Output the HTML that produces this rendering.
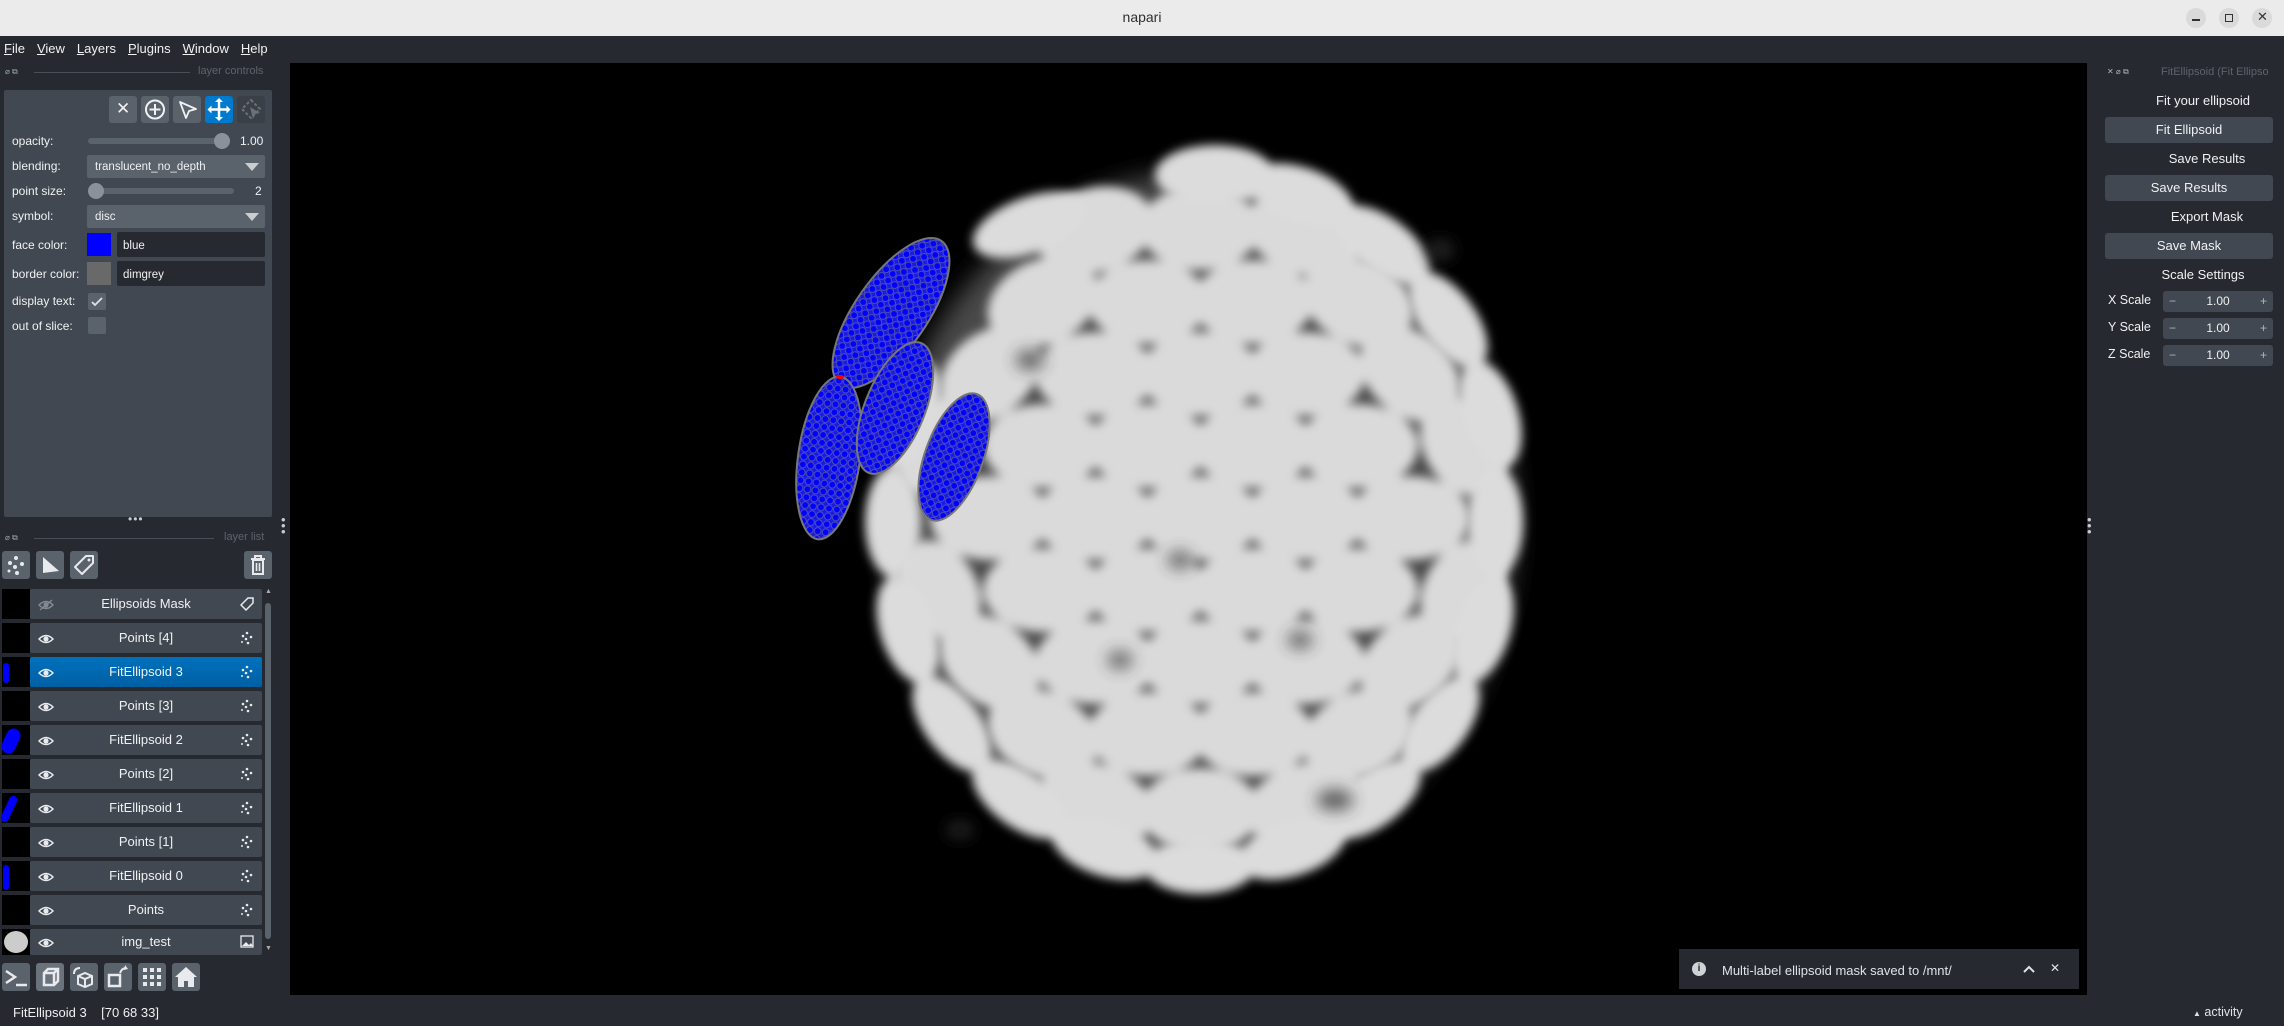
<!DOCTYPE html>
<html><head><meta charset="utf-8"><style>
*{margin:0;padding:0;box-sizing:border-box}
body{width:2284px;height:1026px;background:#262930;font-family:"Liberation Sans","DejaVu Sans",sans-serif;color:#f0f1f2;position:relative;overflow:hidden}
.a{position:absolute}
.t{position:absolute;white-space:nowrap}
.lbl{font-size:12px;color:#f0f1f2}
.btn{position:absolute;background:#5a626c;border-radius:3px}
.row{position:absolute;left:30px;width:232px;height:30px;background:#414851;border-radius:2px;font-size:13px;text-align:center;line-height:30px}
.th{position:absolute;left:2px;width:28px;height:30px;background:#000}
.eye{position:absolute;left:8px;top:9px}
.pi{position:absolute;right:8px;top:8px}
.lb{position:absolute;width:28px;height:28px;background:#5a626c;border-radius:3px}
.rbtn{position:absolute;left:2105px;width:168px;height:26px;background:#414851;border-radius:3px;font-size:13px;text-align:center;line-height:26px}
.rl{position:absolute;font-size:13px;text-align:center;width:130px}
.sp{position:absolute;left:2163px;width:110px;height:21px;background:#414851;border-radius:3px;font-size:12px;line-height:21px;text-align:center}
</style></head><body>
<!-- title bar -->
<div class="a" style="left:0;top:0;width:2284px;height:36px;background:#ebebeb"></div>
<div class="t" style="left:0;width:2284px;top:9px;text-align:center;font-size:14px;color:#2e2e2e">napari</div>
<div class="a" style="left:2186px;top:8px;width:20px;height:20px;border-radius:50%;background:#dadada"></div>
<div class="a" style="left:2192px;top:19px;width:8px;height:1.5px;background:#333"></div>
<div class="a" style="left:2219px;top:8px;width:20px;height:20px;border-radius:50%;background:#dadada"></div>
<div class="a" style="left:2225px;top:14px;width:8px;height:8px;border:1.3px solid #333"></div>
<div class="a" style="left:2252px;top:8px;width:20px;height:20px;border-radius:50%;background:#dadada"></div>
<div class="t" style="left:2257px;top:9px;font-size:13px;color:#333">✕</div>
<!-- menu -->
<div class="t" style="left:4px;top:41px;font-size:13px">
<span style="margin-right:12px"><u>F</u>ile</span><span style="margin-right:12px"><u>V</u>iew</span><span style="margin-right:12px"><u>L</u>ayers</span><span style="margin-right:12px"><u>P</u>lugins</span><span style="margin-right:12px"><u>W</u>indow</span><span><u>H</u>elp</span></div>

<!-- layer controls -->
<div class="t" style="left:5px;top:67px;font-size:8px;color:#9aa">⌀ ⧉</div>
<div class="a" style="left:34px;top:72px;width:156px;height:1px;background:#4a4f57"></div>
<div class="t" style="left:198px;top:65px;font-size:11px;color:#5d636b">layer controls</div>
<div class="a" style="left:4px;top:90px;width:268px;height:427px;background:#414851;border-radius:2px"></div>
<div class="btn" style="left:109px;top:96px;width:28px;height:27px"></div><div class="t" style="left:116px;top:99px;font-size:17px">✕</div>
<div class="btn" style="left:141px;top:96px;width:28px;height:27px"></div>
<svg class="a" style="left:141px;top:96px" width="28" height="27"><circle cx="14" cy="13.5" r="9" fill="none" stroke="#f0f1f2" stroke-width="2"/><path d="M14 8v11M8.5 13.5h11" stroke="#f0f1f2" stroke-width="2"/></svg>
<div class="btn" style="left:173px;top:96px;width:28px;height:27px"></div>
<svg class="a" style="left:173px;top:96px" width="28" height="27"><path d="M7 6l16 7-7 2-3 7z" fill="none" stroke="#f0f1f2" stroke-width="1.8" stroke-linejoin="round"/></svg>
<div class="a" style="left:205px;top:96px;width:28px;height:27px;background:#007acc;border-radius:3px"></div>
<svg class="a" style="left:205px;top:96px" width="28" height="27"><path d="M14 4v19M4.5 13.5h19" stroke="#fff" stroke-width="2.5"/><path d="M14 2l-4 4h8zM14 25l-4-4h8zM2.5 13.5l4-4v8zM25.5 13.5l-4-4v8z" fill="#fff"/></svg>
<div class="a" style="left:237px;top:96px;width:28px;height:27px;background:#3b4048;border-radius:3px"></div>
<svg class="a" style="left:237px;top:96px" width="28" height="27"><path d="M14 4l9 9-9 9-9-9z" fill="none" stroke="#6a717a" stroke-width="2" stroke-dasharray="3 2"/><path d="M13 11l10 6-5 1-2 5z" fill="#6a717a"/></svg>

<div class="t lbl" style="left:12px;top:134px">opacity:</div>
<div class="a" style="left:88px;top:138px;width:140px;height:6px;background:#5a626c;border-radius:3px"></div>
<div class="a" style="left:214px;top:133px;width:16px;height:16px;border-radius:50%;background:#8b9198"></div>
<div class="t lbl" style="left:240px;top:134px">1.00</div>
<div class="t lbl" style="left:12px;top:159px">blending:</div>
<div class="a" style="left:87px;top:155px;width:178px;height:23px;background:#5a626c;border-radius:2px"></div>
<div class="t" style="left:95px;top:161px;font-size:11.5px">translucent_no_depth</div>
<div class="a" style="left:245px;top:163px;border:7px solid transparent;border-top:8px solid #c9cdd1;border-bottom:0"></div>
<div class="t lbl" style="left:12px;top:184px">point size:</div>
<div class="a" style="left:88px;top:188px;width:146px;height:6px;background:#5a626c;border-radius:3px"></div>
<div class="a" style="left:88px;top:183px;width:16px;height:16px;border-radius:50%;background:#8b9198"></div>
<div class="t lbl" style="left:255px;top:184px">2</div>
<div class="t lbl" style="left:12px;top:209px">symbol:</div>
<div class="a" style="left:87px;top:205px;width:178px;height:23px;background:#5a626c;border-radius:2px"></div>
<div class="t" style="left:95px;top:211px;font-size:11.5px">disc</div>
<div class="a" style="left:245px;top:213px;border:7px solid transparent;border-top:8px solid #c9cdd1;border-bottom:0"></div>
<div class="t lbl" style="left:12px;top:238px">face color:</div>
<div class="a" style="left:87px;top:233px;width:24px;height:23px;background:#0000ff"></div>
<div class="a" style="left:117px;top:232px;width:148px;height:25px;background:#262930;border-radius:2px"></div>
<div class="t" style="left:123px;top:240px;font-size:11.5px">blue</div>
<div class="t lbl" style="left:12px;top:267px">border color:</div>
<div class="a" style="left:87px;top:262px;width:24px;height:23px;background:#696969"></div>
<div class="a" style="left:117px;top:261px;width:148px;height:25px;background:#262930;border-radius:2px"></div>
<div class="t" style="left:123px;top:269px;font-size:11.5px">dimgrey</div>
<div class="t lbl" style="left:12px;top:294px">display text:</div>
<div class="a" style="left:88px;top:293px;width:18px;height:17px;background:#5a626c;border-radius:2px"></div>
<svg class="a" style="left:88px;top:293px" width="18" height="17"><path d="M4 9l3 3 7-7" fill="none" stroke="#e0e3e6" stroke-width="1.8"/></svg>
<div class="t lbl" style="left:12px;top:319px">out of slice:</div>
<div class="a" style="left:88px;top:317px;width:18px;height:17px;background:#5a626c;border-radius:2px"></div>

<div class="t" style="left:128px;top:512px;font-size:12px;color:#c8ccd0;letter-spacing:1px">•••</div>
<div class="t" style="left:281px;top:517px;font-size:13px;color:#c8ccd0;line-height:6px">•<br>•<br>•</div>

<!-- layer list -->
<div class="t" style="left:5px;top:533px;font-size:8px;color:#9aa">⌀ ⧉</div>
<div class="a" style="left:34px;top:538px;width:180px;height:1px;background:#4a4f57"></div>
<div class="t" style="left:224px;top:531px;font-size:11px;color:#5d636b">layer list</div>
<div class="lb" style="left:2px;top:551px"></div>
<svg class="a" style="left:2px;top:551px" width="28" height="28"><g fill="#e8eaed"><circle cx="14" cy="7" r="2"/><circle cx="8" cy="12" r="2"/><circle cx="20" cy="13" r="2"/><circle cx="13" cy="16" r="2"/><circle cx="7" cy="20" r="1.5"/><circle cx="15" cy="22" r="2"/></g></svg>
<div class="lb" style="left:36px;top:551px"></div>
<svg class="a" style="left:36px;top:551px" width="28" height="28"><path d="M7 6l16 14-16 2z" fill="#e8eaed"/></svg>
<div class="lb" style="left:70px;top:551px"></div>
<svg class="a" style="left:70px;top:551px" width="28" height="28"><path d="M16 5h7v7L12 23 5 16z" fill="none" stroke="#e8eaed" stroke-width="2" stroke-linejoin="round"/><circle cx="19" cy="9" r="1.5" fill="#e8eaed"/></svg>
<div class="lb" style="left:244px;top:551px"></div>
<svg class="a" style="left:244px;top:551px" width="28" height="28"><path d="M7 8h14M11 8V5h6v3M9 9h10v14H9z" fill="none" stroke="#e8eaed" stroke-width="2"/><path d="M12.5 12v8M15.5 12v8" stroke="#e8eaed" stroke-width="1.6"/></svg>

<div class="a" style="left:264px;top:589px;width:8px;height:366px;background:#262930"></div>
<div class="a" style="left:265px;top:603px;width:6px;height:336px;background:#5a626c;border-radius:3px"></div>
<div class="t" style="left:265px;top:588px;font-size:7px;color:#aaa">▲</div>
<div class="t" style="left:265px;top:945px;font-size:7px;color:#aaa">▼</div>

<svg width="0" height="0" style="position:absolute"><defs>
<g id="eye"><path d="M1 7Q8 0 15 7Q8 14 1 7z" fill="none" stroke="#e8eaed" stroke-width="1.5"/><circle cx="8" cy="7" r="2.6" fill="#e8eaed"/></g>
<g id="pts"><g fill="#e8eaed"><circle cx="7" cy="2" r="1.3"/><circle cx="3" cy="5" r="1.3"/><circle cx="11" cy="6" r="1.3"/><circle cx="6" cy="8" r="1.3"/><circle cx="2" cy="11" r="1"/><circle cx="8" cy="12" r="1.3"/></g></g>
</defs></svg>

<div class="th" style="top:589px"></div><div class="row" style="top:589px">Ellipsoids Mask<svg class="eye" width="16" height="14" style="opacity:.4"><use href="#eye"/><path d="M2 12L14 2" stroke="#e8eaed" stroke-width="1.3"/></svg><svg class="pi" width="14" height="14"><path d="M8 1h5v5L6 13 1 8z" fill="none" stroke="#e8eaed" stroke-width="1.5"/></svg></div>
<div class="th" style="top:623px"></div><div class="row" style="top:623px">Points [4]<svg class="eye" width="16" height="14"><use href="#eye"/></svg><svg class="pi" width="14" height="14"><use href="#pts"/></svg></div>
<div class="th" style="top:657px"><div class="a" style="left:1px;top:6px;width:6px;height:20px;background:#00f;border-radius:3px"></div></div><div class="row" style="top:657px;background:linear-gradient(#0071bc,#005fa3)">FitEllipsoid 3<svg class="eye" width="16" height="14"><use href="#eye"/></svg><svg class="pi" width="14" height="14"><use href="#pts"/></svg></div>
<div class="th" style="top:691px"></div><div class="row" style="top:691px">Points [3]<svg class="eye" width="16" height="14"><use href="#eye"/></svg><svg class="pi" width="14" height="14"><use href="#pts"/></svg></div>
<div class="th" style="top:725px"><div class="a" style="left:2px;top:3px;width:14px;height:26px;background:#00f;border-radius:7px;transform:rotate(25deg)"></div></div><div class="row" style="top:725px">FitEllipsoid 2<svg class="eye" width="16" height="14"><use href="#eye"/></svg><svg class="pi" width="14" height="14"><use href="#pts"/></svg></div>
<div class="th" style="top:759px"></div><div class="row" style="top:759px">Points [2]<svg class="eye" width="16" height="14"><use href="#eye"/></svg><svg class="pi" width="14" height="14"><use href="#pts"/></svg></div>
<div class="th" style="top:793px"><div class="a" style="left:3px;top:2px;width:8px;height:28px;background:#00f;border-radius:4px;transform:rotate(25deg)"></div></div><div class="row" style="top:793px">FitEllipsoid 1<svg class="eye" width="16" height="14"><use href="#eye"/></svg><svg class="pi" width="14" height="14"><use href="#pts"/></svg></div>
<div class="th" style="top:827px"></div><div class="row" style="top:827px">Points [1]<svg class="eye" width="16" height="14"><use href="#eye"/></svg><svg class="pi" width="14" height="14"><use href="#pts"/></svg></div>
<div class="th" style="top:861px"><div class="a" style="left:1px;top:4px;width:6px;height:25px;background:#00f;border-radius:3px"></div></div><div class="row" style="top:861px">FitEllipsoid 0<svg class="eye" width="16" height="14"><use href="#eye"/></svg><svg class="pi" width="14" height="14"><use href="#pts"/></svg></div>
<div class="th" style="top:895px"></div><div class="row" style="top:895px">Points<svg class="eye" width="16" height="14"><use href="#eye"/></svg><svg class="pi" width="14" height="14"><use href="#pts"/></svg></div>
<div class="th" style="top:929px;height:26px"><div class="a" style="left:2px;top:2px;width:24px;height:22px;background:#ccc;border-radius:50%"></div></div><div class="row" style="top:929px;height:26px;line-height:26px">img_test<svg class="eye" width="16" height="14" style="top:7px"><use href="#eye"/></svg><svg class="pi" width="14" height="14" style="top:6px"><rect x="1" y="1" width="12" height="11" fill="none" stroke="#e8eaed" stroke-width="1.3"/><path d="M2 11l4-4 3 3 2-2 2 3z" fill="#e8eaed"/></svg></div>

<!-- bottom buttons -->
<div class="lb" style="left:2px;top:963px"></div><svg class="a" style="left:2px;top:963px" width="28" height="28"><path d="M4 8l9 6-9 6" fill="none" stroke="#e8eaed" stroke-width="2.5"/><path d="M14 22h11" stroke="#e8eaed" stroke-width="2.5"/></svg>
<div class="lb" style="left:36px;top:963px;background:#6a727c"></div><svg class="a" style="left:36px;top:963px" width="28" height="28"><path d="M8 10l4-4h10v12l-4 4H8z M8 10h10v12 M18 10l4-4" fill="none" stroke="#e8eaed" stroke-width="2.5"/></svg>
<div class="lb" style="left:70px;top:963px"></div><svg class="a" style="left:70px;top:963px" width="28" height="28"><path d="M8 13l7-3 7 3v8l-7 3-7-3z M8 13l7 3 7-3 M15 16v8" fill="none" stroke="#e8eaed" stroke-width="2"/><path d="M4 11q0-6 6-6" fill="none" stroke="#e8eaed" stroke-width="2"/></svg>
<div class="lb" style="left:104px;top:963px"></div><svg class="a" style="left:104px;top:963px" width="28" height="28"><rect x="5" y="12" width="11" height="11" fill="none" stroke="#e8eaed" stroke-width="2.5"/><path d="M16 10q2-5 6-5" fill="none" stroke="#e8eaed" stroke-width="2"/><path d="M21 2l3 4-4 1z" fill="#e8eaed"/></svg>
<div class="lb" style="left:138px;top:963px"></div><svg class="a" style="left:138px;top:963px" width="28" height="28"><g fill="#e8eaed"><rect x="5" y="5" width="4" height="4"/><rect x="12" y="5" width="4" height="4"/><rect x="19" y="5" width="4" height="4"/><rect x="5" y="12" width="4" height="4"/><rect x="12" y="12" width="4" height="4"/><rect x="19" y="12" width="4" height="4"/><rect x="5" y="19" width="4" height="4"/><rect x="12" y="19" width="4" height="4"/><rect x="19" y="19" width="4" height="4"/></g></svg>
<div class="lb" style="left:172px;top:963px"></div><svg class="a" style="left:172px;top:963px" width="28" height="28"><path d="M14 4L3 14h3v10h6v-6h4v6h6V14h3z" fill="#e8eaed"/></svg>

<div class="t" style="left:13px;top:1005px;font-size:13px">FitEllipsoid 3&nbsp;&nbsp;&nbsp;&nbsp;[70 68 33]</div>

<!-- canvas -->
<svg class="a" style="left:290px;top:63px" width="1797" height="932" viewBox="290 63 1797 932">
<defs>
<filter id="b1" x="-20%" y="-20%" width="140%" height="140%"><feGaussianBlur stdDeviation="12"/></filter>
<filter id="b3" x="-20%" y="-20%" width="140%" height="140%"><feGaussianBlur stdDeviation="5"/></filter>
<filter id="b4" x="-50%" y="-50%" width="200%" height="200%"><feGaussianBlur stdDeviation="8"/></filter>
<pattern id="pc" width="8" height="8" patternUnits="userSpaceOnUse"><rect width="8" height="8" fill="#1a1ae0"/><circle cx="4" cy="4" r="3.4" fill="#0000ff" stroke="#5555b0" stroke-width="0.9"/></pattern>
</defs>
<rect x="290" y="63" width="1797" height="932" fill="#000"/>
<g filter="url(#b1)"><ellipse cx="1200" cy="522" rx="315" ry="350" fill="#4a4a4a"/></g>
<g filter="url(#b3)" fill="#dadada">
<ellipse cx="1095" cy="230" rx="60" ry="42" transform="rotate(-15 1095 230)"/><ellipse cx="1200" cy="228" rx="60" ry="42"/><ellipse cx="1305" cy="232" rx="60" ry="42" transform="rotate(15 1305 232)"/>
<ellipse cx="1043" cy="302" rx="58" ry="42" transform="rotate(-25 1043 302)"/><ellipse cx="1148" cy="302" rx="60" ry="42"/><ellipse cx="1253" cy="302" rx="60" ry="42"/><ellipse cx="1358" cy="302" rx="58" ry="42" transform="rotate(25 1358 302)"/>
<ellipse cx="990" cy="374" rx="56" ry="41" transform="rotate(-40 990 374)"/><ellipse cx="1095" cy="374" rx="60" ry="42"/><ellipse cx="1200" cy="374" rx="60" ry="42"/><ellipse cx="1305" cy="374" rx="60" ry="42"/><ellipse cx="1410" cy="374" rx="56" ry="41" transform="rotate(40 1410 374)"/>
<ellipse cx="938" cy="446" rx="53" ry="39" transform="rotate(-60 938 446)"/><ellipse cx="1043" cy="446" rx="60" ry="42"/><ellipse cx="1148" cy="446" rx="60" ry="42"/><ellipse cx="1253" cy="446" rx="60" ry="42"/><ellipse cx="1358" cy="446" rx="60" ry="42"/><ellipse cx="1463" cy="446" rx="53" ry="39" transform="rotate(60 1463 446)"/>
<ellipse cx="990" cy="518" rx="60" ry="42"/><ellipse cx="1095" cy="518" rx="60" ry="42"/><ellipse cx="1200" cy="518" rx="60" ry="42"/><ellipse cx="1305" cy="518" rx="60" ry="42"/><ellipse cx="1410" cy="518" rx="60" ry="42"/>
<ellipse cx="938" cy="590" rx="53" ry="39" transform="rotate(60 938 590)"/><ellipse cx="1043" cy="590" rx="60" ry="42"/><ellipse cx="1148" cy="590" rx="60" ry="42"/><ellipse cx="1253" cy="590" rx="60" ry="42"/><ellipse cx="1358" cy="590" rx="60" ry="42"/><ellipse cx="1463" cy="590" rx="53" ry="39" transform="rotate(-60 1463 590)"/>
<ellipse cx="990" cy="662" rx="56" ry="41" transform="rotate(40 990 662)"/><ellipse cx="1095" cy="662" rx="60" ry="42"/><ellipse cx="1200" cy="662" rx="60" ry="42"/><ellipse cx="1305" cy="662" rx="60" ry="42"/><ellipse cx="1410" cy="662" rx="56" ry="41" transform="rotate(-40 1410 662)"/>
<ellipse cx="1043" cy="734" rx="58" ry="42" transform="rotate(25 1043 734)"/><ellipse cx="1148" cy="734" rx="60" ry="42"/><ellipse cx="1253" cy="734" rx="60" ry="42"/><ellipse cx="1358" cy="734" rx="58" ry="42" transform="rotate(-25 1358 734)"/>
<ellipse cx="1095" cy="806" rx="60" ry="42" transform="rotate(15 1095 806)"/><ellipse cx="1200" cy="810" rx="60" ry="42"/><ellipse cx="1305" cy="806" rx="60" ry="42" transform="rotate(-15 1305 806)"/>
</g>
<g filter="url(#b3)" fill="#dcdcdc">
<ellipse cx="1495" cy="522" rx="55" ry="28" transform="rotate(90 1495 522)"/>
<ellipse cx="1482" cy="630" rx="55" ry="28" transform="rotate(108 1482 630)"/>
<ellipse cx="1440" cy="724" rx="55" ry="28" transform="rotate(126 1440 724)"/>
<ellipse cx="1373" cy="799" rx="55" ry="28" transform="rotate(144 1373 799)"/>
<ellipse cx="1292" cy="848" rx="55" ry="28" transform="rotate(162 1292 848)"/>
<ellipse cx="1200" cy="866" rx="55" ry="28"/>
<ellipse cx="1105" cy="848" rx="55" ry="28" transform="rotate(18 1105 848)"/>
<ellipse cx="1020" cy="799" rx="55" ry="28" transform="rotate(36 1020 799)"/>
<ellipse cx="952" cy="724" rx="55" ry="28" transform="rotate(54 952 724)"/>
<ellipse cx="908" cy="630" rx="55" ry="28" transform="rotate(72 908 630)"/>
<ellipse cx="893" cy="522" rx="55" ry="28" transform="rotate(90 893 522)"/>
<ellipse cx="910" cy="414" rx="55" ry="28" transform="rotate(108 910 414)"/>
<ellipse cx="1030" cy="225" rx="60" ry="28" transform="rotate(-20 1030 225)"/>
<ellipse cx="1215" cy="175" rx="60" ry="30"/>
<ellipse cx="1300" cy="195" rx="55" ry="28" transform="rotate(18 1300 195)"/>
<ellipse cx="1382" cy="245" rx="55" ry="28" transform="rotate(36 1382 245)"/>
<ellipse cx="1448" cy="320" rx="55" ry="28" transform="rotate(54 1448 320)"/>
<ellipse cx="1490" cy="414" rx="55" ry="28" transform="rotate(72 1490 414)"/>
</g>
<g filter="url(#b4)" fill="#333" opacity=".8">
<ellipse cx="1030" cy="360" rx="14" ry="9"/><ellipse cx="1180" cy="560" rx="12" ry="8"/><ellipse cx="1335" cy="800" rx="18" ry="10"/><ellipse cx="1440" cy="250" rx="14" ry="10"/><ellipse cx="1120" cy="660" rx="12" ry="8"/><ellipse cx="1300" cy="640" rx="12" ry="8"/><ellipse cx="960" cy="830" rx="14" ry="8"/>
</g>
<g stroke="#777" stroke-width="2">
<ellipse cx="891" cy="313" rx="88" ry="36" transform="rotate(-55 891 313)" fill="url(#pc)"/>
<ellipse cx="829" cy="458" rx="31" ry="82" transform="rotate(8 829 458)" fill="url(#pc)"/>
<ellipse cx="895" cy="408" rx="30" ry="70" transform="rotate(22 895 408)" fill="url(#pc)"/>
<ellipse cx="954" cy="457" rx="29" ry="67" transform="rotate(20 954 457)" fill="url(#pc)"/>
</g>
<ellipse cx="840" cy="377" rx="4" ry="2" fill="#f00"/>
</svg>

<div class="t" style="left:2087px;top:517px;font-size:13px;color:#c8ccd0;line-height:6px">•<br>•<br>•</div>

<!-- notification -->
<div class="a" style="left:1679px;top:949px;width:400px;height:40px;background:#262930"></div>
<div class="a" style="left:1692px;top:962px;width:14px;height:14px;border-radius:50%;background:#d0d3d6;color:#262930;font-size:10px;font-weight:bold;text-align:center;line-height:14px">i</div>
<div class="t" style="left:1722px;top:963px;font-size:13px;color:#e0e3e6">Multi-label ellipsoid mask saved to /mnt/</div>
<svg class="a" style="left:2023px;top:964px" width="12" height="10"><path d="M1 8l5-5 5 5" fill="none" stroke="#e0e3e6" stroke-width="2"/></svg>
<div class="t" style="left:2050px;top:961px;font-size:12px;color:#e0e3e6">✕</div>
<div class="t" style="left:2193px;top:1005px;font-size:12.5px;color:#e0e3e6"><span style="font-size:8px">▲</span> activity</div>

<!-- right panel -->
<div class="t" style="left:2107px;top:67px;font-size:8px;color:#b0b4b8">✕ ⌀ ⧉</div>
<div class="t" style="left:2161px;top:66px;font-size:11px;color:#5d636b">FitEllipsoid (Fit Ellipso</div>
<div class="rl" style="left:2138px;top:93px">Fit your ellipsoid</div>
<div class="rbtn" style="top:117px">Fit Ellipsoid</div>
<div class="rl" style="left:2142px;top:151px">Save Results</div>
<div class="rbtn" style="top:175px">Save Results</div>
<div class="rl" style="left:2142px;top:209px">Export Mask</div>
<div class="rbtn" style="top:233px">Save Mask</div>
<div class="rl" style="left:2138px;top:267px">Scale Settings</div>
<div class="t" style="left:2108px;top:293px;font-size:12.5px">X Scale</div>
<div class="sp" style="top:291px">1.00<span style="position:absolute;left:6px;color:#b0b4b8">−</span><span style="position:absolute;right:6px;color:#b0b4b8">+</span></div>
<div class="t" style="left:2108px;top:320px;font-size:12.5px">Y Scale</div>
<div class="sp" style="top:318px">1.00<span style="position:absolute;left:6px;color:#b0b4b8">−</span><span style="position:absolute;right:6px;color:#b0b4b8">+</span></div>
<div class="t" style="left:2108px;top:347px;font-size:12.5px">Z Scale</div>
<div class="sp" style="top:345px">1.00<span style="position:absolute;left:6px;color:#b0b4b8">−</span><span style="position:absolute;right:6px;color:#b0b4b8">+</span></div>
</body></html>
